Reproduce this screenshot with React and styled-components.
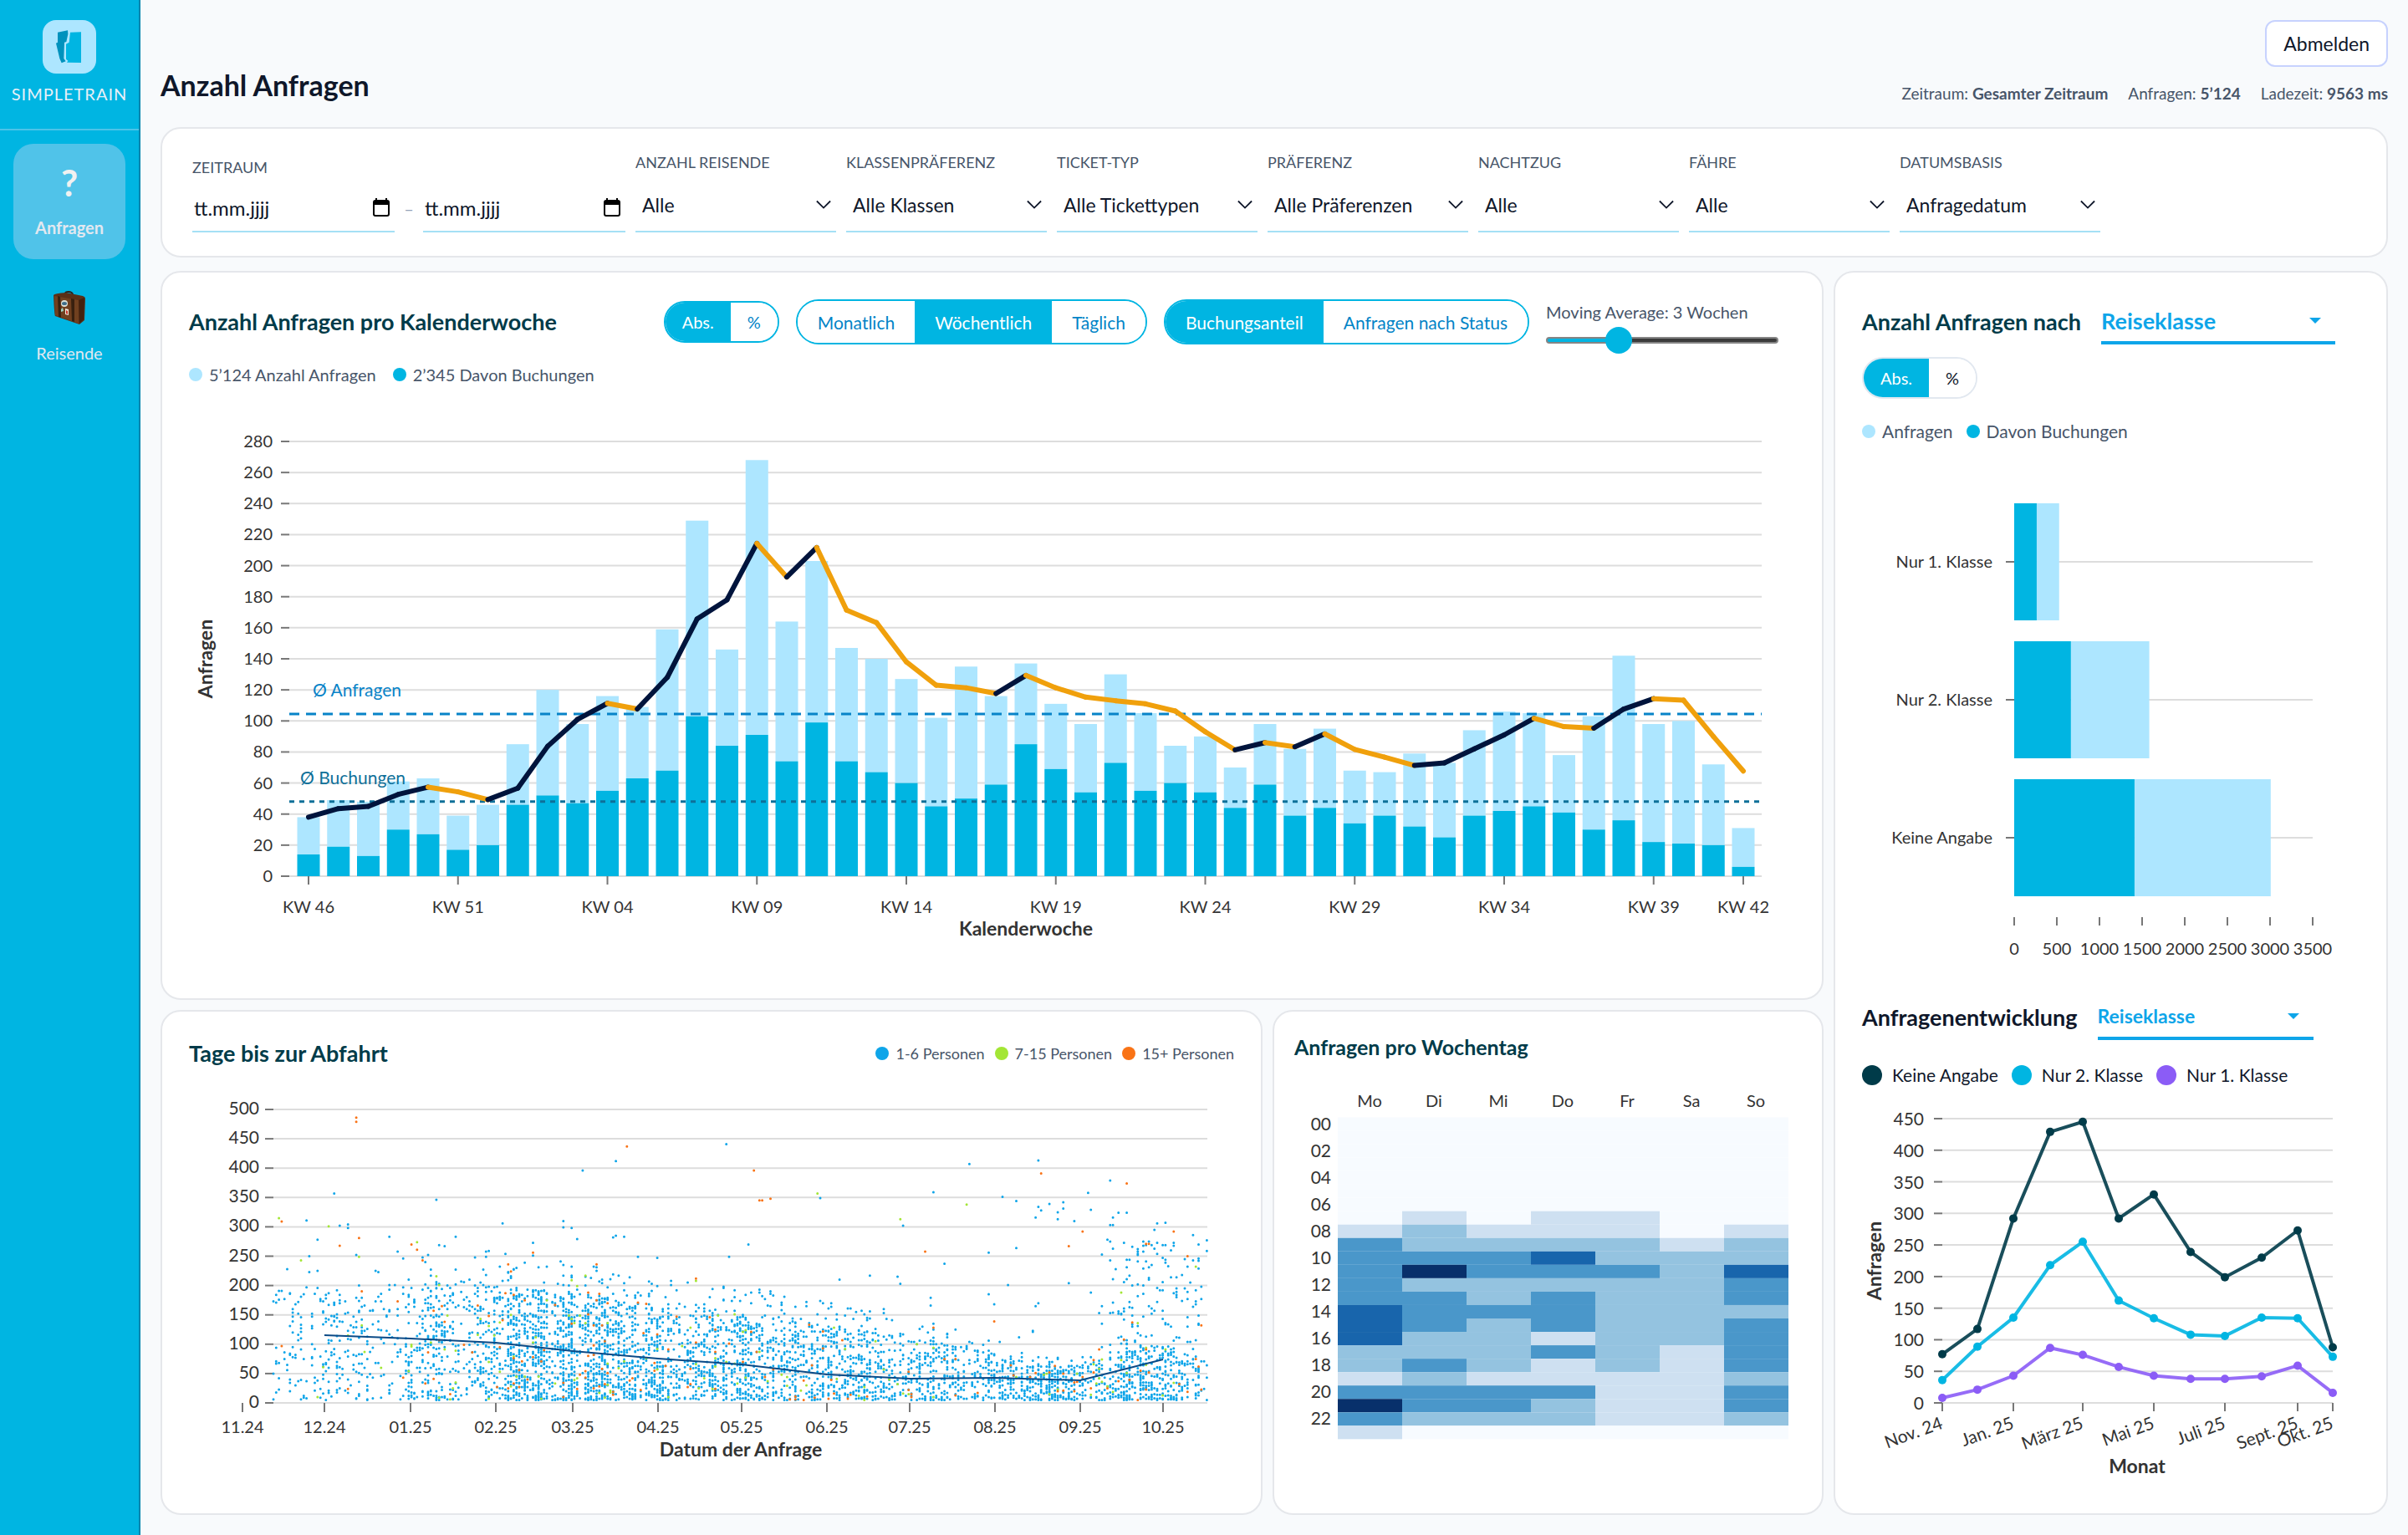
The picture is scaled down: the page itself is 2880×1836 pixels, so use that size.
import React, { useState } from 'react';
import styled, { createGlobalStyle } from 'styled-components';

const weeks = [
  [38, 14], [49, 19], [48, 13], [61, 30], [63, 27], [39, 17], [46, 20],
  [85, 46], [120, 52], [98, 47], [116, 55], [109, 63], [159, 68], [229, 103],
  [146, 84], [268, 91], [164, 74], [203, 99], [147, 74], [140, 67], [127, 60],
  [102, 45], [135, 50], [116, 59], [137, 85], [111, 69], [98, 54], [130, 73],
  [105, 55], [84, 60], [90, 54], [70, 44], [98, 59], [82, 39], [95, 44],
  [68, 34], [67, 39], [79, 32], [73, 25], [94, 39], [106, 42], [105, 45],
  [78, 41], [103, 30], [142, 36], [98, 22], [100, 21], [72, 20], [31, 6],
];

const weekTicks = [
  [0, 'KW 46'], [5, 'KW 51'], [10, 'KW 04'], [15, 'KW 09'], [20, 'KW 14'], [25, 'KW 19'],
  [30, 'KW 24'], [35, 'KW 29'], [40, 'KW 34'], [45, 'KW 39'], [48, 'KW 42'],
];

const filters = [
  { id: 'reisende', label: 'Anzahl Reisende', value: 'Alle' },
  { id: 'klasse', label: 'Klassenpräferenz', value: 'Alle Klassen' },
  { id: 'ticket', label: 'Ticket-Typ', value: 'Alle Tickettypen' },
  { id: 'praeferenz', label: 'Präferenz', value: 'Alle Präferenzen' },
  { id: 'nachtzug', label: 'Nachtzug', value: 'Alle' },
  { id: 'faehre', label: 'Fähre', value: 'Alle' },
  { id: 'basis', label: 'Datumsbasis', value: 'Anfragedatum' },
];

const classes = [
  { name: 'Nur 1. Klasse', total: 527, booked: 264 },
  { name: 'Nur 2. Klasse', total: 1584, booked: 665 },
  { name: 'Keine Angabe', total: 3008, booked: 1411 },
];

const monthX = [96, 138, 181, 225, 264, 307, 349, 393, 434, 478, 521, 563];
const monthTicks = [
  [0, 'Nov. 24'], [2, 'Jan. 25'], [4, 'März 25'], [6, 'Mai 25'],
  [8, 'Juli 25'], [10, 'Sept. 25'], [11, 'Okt. 25'],
];
const series = [
  { name: 'Keine Angabe', color: '#003b49', values: [77, 117, 292, 429, 445, 292, 330, 239, 199, 230, 273, 88] },
  { name: 'Nur 2. Klasse', color: '#00b5e2', values: [36, 89, 135, 218, 255, 162, 134, 108, 106, 135, 134, 73] },
  { name: 'Nur 1. Klasse', color: '#8b5cf6', values: [8, 21, 43, 87, 76, 57, 43, 38, 38, 42, 59, 16] },
];

const days = ['Mo', 'Di', 'Mi', 'Do', 'Fr', 'Sa', 'So'];
const heat = [
  '0000000', '0000000', '0000000', '0000000', '0000000', '0000000', '0000000', '0101100',
  '1211101', '3222212', '3334222', '3533324', '3222223', '3323223', '4333222', '4323223',
  '4221223', '2223213', '2321213', '1211112', '3333113', '5332113', '3222112', '1000000',
];
const heatColors = ['#f7fbff', '#cee0f1', '#94c3e0', '#4a97ca', '#1865ac', '#08306b'];

const movingAverage = (list, size) =>
  list.map((_, i) => {
    const part = list.slice(Math.max(0, i - size + 1), i + 1);
    return part.reduce((sum, n) => sum + n, 0) / part.length;
  });

const range = (from, to, step) => {
  const out = [];
  for (let n = from; n <= to; n += step) out.push(n);
  return out;
};

// small seeded generator so the scatter looks the same on every load
const createRandom = (seed) => {
  let s = seed;
  return () => {
    s = (s * 1664525 + 1013904223) % 4294967296;
    return s / 4294967296;
  };
};

const envelope = [
  [0, 190], [60, 200], [100, 190], [130, 168], [160, 155], [200, 128],
  [230, 108], [260, 82], [275, 62], [295, 60], [310, 95], [339, 88],
];

const upperBound = (day) => {
  const i = Math.max(1, envelope.findIndex(([d]) => d >= day));
  const [d0, v0] = envelope[i - 1];
  const [d1, v1] = envelope[i];
  return v0 + ((v1 - v0) * (day - d0)) / (d1 - d0);
};

// [day, value, group]
const outliers = [
  [30, 486, 2], [30, 479, 2], [128, 437, 2], [124, 412, 0], [112, 396, 0], [164, 441, 0],
  [22, 357, 0], [59, 346, 0], [2, 315, 1], [3, 309, 2], [31, 281, 2], [12, 311, 0],
  [27, 304, 0], [27, 298, 0], [83, 306, 0], [105, 310, 0], [105, 299, 0], [108, 298, 0],
  [20, 301, 1], [24, 302, 0], [42, 283, 0], [16, 278, 0], [24, 268, 2], [50, 270, 2],
  [52, 261, 2], [52, 274, 1], [66, 283, 0], [94, 273, 0], [110, 279, 0], [123, 282, 0],
  [124, 285, 0], [127, 283, 0], [132, 249, 0], [139, 247, 0], [165, 249, 0], [172, 270, 0],
  [174, 396, 2], [176, 345, 2], [177, 345, 2], [180, 348, 2], [197, 357, 1], [198, 349, 0],
  [227, 313, 1], [228, 302, 0], [236, 258, 2], [239, 359, 0], [243, 237, 0], [251, 338, 1],
  [252, 407, 0], [259, 256, 0], [264, 351, 0], [269, 344, 0], [269, 264, 0], [277, 413, 0],
  [278, 391, 2], [303, 379, 0], [309, 374, 2], [295, 358, 0], [293, 292, 2], [288, 267, 2],
  [286, 342, 0], [286, 331, 0], [281, 339, 0], [284, 325, 0], [284, 313, 0], [277, 334, 0],
  [278, 328, 0], [276, 316, 0], [296, 329, 0], [304, 316, 0], [304, 303, 0], [303, 303, 0],
  [306, 324, 0], [309, 324, 0], [290, 310, 0], [320, 306, 0], [323, 307, 0], [319, 295, 0],
  [326, 292, 2], [333, 286, 0], [331, 250, 2], [338, 277, 0], [335, 270, 0], [326, 273, 0],
];

const buildScatter = () => {
  const random = createRandom(46);
  const groups = ['', '', ''];
  const add = (day, value, group) => {
    const x = (101 + day * 3.303).toFixed(1);
    const y = (378 - value * 0.702).toFixed(1);
    groups[group] += `M${x} ${y}h0`;
  };
  for (let day = 0; day < 339; day += 1) {
    const count = Math.round((weeks[Math.floor(day / 7)][0] / 7) * (0.3 + random() * 1.3));
    const upper = upperBound(day);
    for (let i = 0; i < count; i += 1) {
      const pick = random();
      let value = 5 + Math.floor(Math.pow(random(), 1.25) * upper);
      if (pick > 0.95) value = Math.floor(upper * (1 + random() * 0.35));
      if (day > 195 && pick < 0.03) value = Math.floor(110 + random() * 110);
      if (day > 298 && pick < 0.2) value = Math.floor(130 + Math.pow(random(), 1.3) * 150);
      const g = random();
      let group = 0;
      if (g > 0.935) group = 1;
      if (g > 0.965) group = 2;
      add(day, value, group);
    }
  }
  outliers.forEach(([day, value, group]) => add(day, value, group));
  return groups;
};

const scatter = buildScatter();

const Dropdown = ({ id, label, value, options = [] }) => (
  <SelectWrap>
    <Select id={id} aria-label={label} defaultValue={value}>
      {[value, ...options].map((o) => <option key={o}>{o}</option>)}
    </Select>
    <Chevron viewBox="0 0 20 20" aria-hidden="true">
      <path d="M1 5l9 9 9-9" fill="none" stroke="#0f172a" strokeWidth="2" />
    </Chevron>
  </SelectWrap>
);

const TitleDropdown = ({ label, large }) => (
  <TitleSelectWrap $large={large}>
    <TitleSelect aria-label={label} $large={large} defaultValue="Reiseklasse">
      <option>Reiseklasse</option>
      <option>Ticket-Typ</option>
    </TitleSelect>
    <Caret viewBox="0 0 16 8" aria-hidden="true">
      <path d="M1 1h14L8 8z" fill="#0ea5e9" />
    </Caret>
  </TitleSelectWrap>
);

const Toggle = ({ options, initial, tall, muted }) => {
  const [active, setActive] = useState(initial);
  return (
    <ToggleGroup $muted={muted}>
      {options.map((option) => (
        <ToggleButton
          key={option}
          type="button"
          $active={option === active}
          $tall={tall}
          $muted={muted}
          onClick={() => setActive(option)}
        >
          {option}
        </ToggleButton>
      ))}
    </ToggleGroup>
  );
};

const DateField = ({ id, label }) => (
  <DateWrap>
    <DateInput id={id} aria-label={label} placeholder="tt.mm.jjjj" />
    <CalendarIcon viewBox="0 0 20 22" aria-hidden="true">
      <path d="M1 3h18v5H1zM3 0h2v3H3zM15 0h2v3h-2z" fill="#000" />
      <rect x="1" y="3" width="18" height="18" rx="2" fill="none" stroke="#000" strokeWidth="2" />
    </CalendarIcon>
  </DateWrap>
);

const WeekChart = ({ average }) => {
  const y = (v) => 568 - (v * 520) / 280;
  const x = (i) => 143 + i * 35.75;
  const line = movingAverage(weeks.map((w) => w[0]), average);
  return (
    <Chart viewBox="0 0 1921 682" role="img" aria-label="Anfragen pro Kalenderwoche">
      {range(0, 280, 20).map((v) => (
        <g key={v}>
          <GridLine x1="120" x2="1881" y1={y(v)} y2={y(v)} />
          <Tick x1="110" x2="120" y1={y(v)} y2={y(v)} />
          <AxisText x="100" y={y(v) + 7} textAnchor="end">{v}</AxisText>
        </g>
      ))}
      {weeks.map(([total, booked], i) => (
        <g key={i}>
          <rect x={x(i) - 13.5} width="27" y={y(total)} height={y(booked) - y(total)} fill="#ade6ff" />
          <rect x={x(i) - 13.5} width="27" y={y(booked)} height={568 - y(booked)} fill="#00b5e2" />
        </g>
      ))}
      {weekTicks.map(([i, text]) => (
        <g key={text}>
          <Tick x1={x(i)} x2={x(i)} y1="568" y2="578" />
          <AxisText x={x(i)} y="612" textAnchor="middle">{text}</AxisText>
        </g>
      ))}
      <line x1="120" x2="1881" y1={y(104.5)} y2={y(104.5)} stroke="#0883c8" strokeWidth="3" strokeDasharray="12 8" />
      <line x1="120" x2="1881" y1={y(48)} y2={y(48)} stroke="#0e7099" strokeWidth="3" strokeDasharray="6 6" />
      {line.slice(1).map((v, i) => (
        <line
          key={i}
          x1={x(i)}
          y1={y(line[i])}
          x2={x(i + 1)}
          y2={y(v)}
          stroke={v > line[i] ? '#00143c' : '#f0a00c'}
          strokeWidth="6"
          strokeLinecap="round"
        />
      ))}
      <AxisText x="148" y="353" fill="#0883c8" $size={21}>Ø Anfragen</AxisText>
      <AxisText x="133" y="458" fill="#0e7099" $size={21}>Ø Buchungen</AxisText>
      <AxisTitle x="1001" y="639" textAnchor="middle">Kalenderwoche</AxisTitle>
      <AxisTitle transform="translate(28 308) rotate(-90)" textAnchor="middle">Anfragen</AxisTitle>
    </Chart>
  );
};

const ClassChart = () => {
  const x = (v) => 182 + (v * 357) / 3500;
  return (
    <Chart viewBox="0 0 595 620" role="img" aria-label="Anfragen nach Reiseklasse">
      {classes.map((c, i) => {
        const top = 42 + i * 165;
        return (
          <g key={c.name}>
            <GridLine x1="182" x2="539" y1={top + 70} y2={top + 70} />
            <Tick x1="172" x2="182" y1={top + 70} y2={top + 70} />
            <AxisText x="156" y={top + 77} textAnchor="end">{c.name}</AxisText>
            <rect x={x(c.booked)} y={top} width={x(c.total) - x(c.booked)} height="140" fill="#ade6ff" />
            <rect x="182" y={top} width={x(c.booked) - 182} height="140" fill="#00b5e2" />
          </g>
        );
      })}
      {range(0, 3500, 500).map((v) => (
        <g key={v}>
          <Tick x1={x(v)} x2={x(v)} y1="537" y2="547" />
          <AxisText x={x(v)} y="582" textAnchor="middle">{v}</AxisText>
        </g>
      ))}
    </Chart>
  );
};

const TrendChart = () => {
  const y = (v) => 368 - (v * 340) / 450;
  return (
    <Chart viewBox="0 0 595 468" role="img" aria-label="Anfragenentwicklung">
      {range(0, 450, 50).map((v) => (
        <g key={v}>
          <GridLine x1="96" x2="563" y1={y(v)} y2={y(v)} />
          <Tick x1="86" x2="96" y1={y(v)} y2={y(v)} />
          <AxisText x="74" y={y(v) + 8} textAnchor="end" $size={21}>{v}</AxisText>
        </g>
      ))}
      {monthTicks.map(([i, text]) => (
        <g key={text}>
          <Tick x1={monthX[i]} x2={monthX[i]} y1="368" y2="378" />
          <AxisText
            transform={`translate(${monthX[i] + 2} 398) rotate(-20)`}
            textAnchor="end"
            $size={21}
          >
            {text}
          </AxisText>
        </g>
      ))}
      {series.map((s) => (
        <g key={s.name}>
          <polyline
            points={s.values.map((v, i) => `${monthX[i]},${y(v)}`).join(' ')}
            fill="none"
            stroke={s.color}
            strokeWidth="4"
            strokeOpacity="0.9"
          />
          {s.values.map((v, i) => <circle key={i} cx={monthX[i]} cy={y(v)} r="5" fill={s.color} />)}
        </g>
      ))}
      <AxisTitle x="329" y="452" textAnchor="middle">Monat</AxisTitle>
      <AxisTitle transform="translate(23 198) rotate(-90)" textAnchor="middle">Anfragen</AxisTitle>
    </Chart>
  );
};

const DepartureChart = () => {
  const y = (v) => 378 - v * 0.702;
  const ticks = [
    [64, '11.24'], [162, '12.24'], [265, '01.25'], [367, '02.25'], [459, '03.25'], [561, '04.25'],
    [661, '05.25'], [763, '06.25'], [862, '07.25'], [964, '08.25'], [1066, '09.25'], [1165, '10.25'],
  ];
  return (
    <Chart viewBox="0 0 1250 478" role="img" aria-label="Tage bis zur Abfahrt">
      {range(0, 500, 50).map((v) => (
        <g key={v}>
          <GridLine x1="101" x2="1218" y1={y(v)} y2={y(v)} />
          <Tick x1="91" x2="101" y1={y(v)} y2={y(v)} />
          <AxisText x="84" y={y(v) + 6} textAnchor="end" $size={21}>{v}</AxisText>
        </g>
      ))}
      {ticks.map(([x, text]) => (
        <g key={text}>
          <Tick x1={x} x2={x} y1="378" y2="389" />
          <AxisText x={x} y="414" textAnchor="middle">{text}</AxisText>
        </g>
      ))}
      <Dots d={scatter[0]} stroke="#0ea5e9" />
      <Dots d={scatter[1]} stroke="#a3e635" />
      <Dots d={scatter[2]} stroke="#f97316" />
      <polyline
        points="162,297 265,301 367,306 459,316 561,325 661,332 763,344 862,349 964,348 1066,351 1165,326"
        fill="none"
        stroke="#0b4a86"
        strokeWidth="2"
      />
      <AxisTitle x="660" y="442" textAnchor="middle">Datum der Anfrage</AxisTitle>
    </Chart>
  );
};

const HeatChart = () => (
  <Chart viewBox="0 0 607 494" role="img" aria-label="Anfragen pro Wochentag">
    {days.map((day, i) => (
      <AxisText key={day} x={90 + i * 77} y="32" textAnchor="middle">{day}</AxisText>
    ))}
    {heat.map((row, hour) => (
      <g key={hour}>
        {row.split('').map((level, i) => (
          <rect key={i} x={52 + i * 77} y={44.4 + hour * 16.04} width="77" height="16.04" fill={heatColors[level]} />
        ))}
        {hour % 2 === 0 && (
          <AxisText x="44" y={60 + hour * 16} textAnchor="end" $size={21}>
            {String(hour).padStart(2, '0')}
          </AxisText>
        )}
      </g>
    ))}
  </Chart>
);

const App = () => {
  const [average, setAverage] = useState(3);
  return (
    <>
      <GlobalStyle />
      <Page>
        <Sidebar>
          <Brand>
            <Logo viewBox="0 0 192 192" aria-hidden="true">
              <rect width="192" height="192" rx="48" fill="#ade6ff" />
              <path d="M54 44L90 37l1 13-6 28-7 2-2 58 7 10-15 6-7-16-13-55 6-3z" fill="#0092bd" />
              <path d="M99 44l39-1v110l-51-1 4-6-7-6V86l11-6z" fill="#00b5e2" />
            </Logo>
            <BrandName>SIMPLETRAIN</BrandName>
          </Brand>
          <Nav>
            <NavItem href="#anfragen" $active>
              <NavMark>?</NavMark>
              Anfragen
            </NavItem>
            <NavItem href="#reisende">
              <Suitcase viewBox="0 0 38 40" aria-hidden="true">
                <path d="M14 5V3q0-2 4-2t5 3v3" fill="none" stroke="#2c211d" strokeWidth="2" />
                <path d="M0 5q1-2 15-3l20 4q3 1 3 3l-1 26-6 5-29-10q-1-1-2-25z" fill="#5a3018" />
                <path d="M1 6l29 5v28L2 29z" fill="#70401f" />
                <path d="M30 11l7-3-1 26-5 5z" fill="#43220f" />
                <path d="M5 6l3 1 1 25-3-1zM21 9l4 1v27l-3-1z" fill="#38200f" />
                <ellipse cx="13" cy="15" rx="4" ry="4" fill="#dfe3d8" />
                <ellipse cx="13" cy="15" rx="3" ry="2" fill="#3f6f8a" />
                <path d="M14 21l4 1v7l-4-1z" fill="#f0e6dc" />
                <path d="M15 23l2 1v4l-2-1z" fill="#c8362c" />
                <path d="M9 22l2-2 1 4-3 1z" fill="#9fd6c4" />
              </Suitcase>
              Reisende
            </NavItem>
          </Nav>
        </Sidebar>
        <Main>
          <TopBar>
            <LogoutButton type="button">Abmelden</LogoutButton>
          </TopBar>
          <TitleRow>
            <PageTitle>Anzahl Anfragen</PageTitle>
            <Meta>
              <span>Zeitraum: <b>Gesamter Zeitraum</b></span>
              <span>Anfragen: <b>5’124</b></span>
              <span>Ladezeit: <b>9563 ms</b></span>
            </Meta>
          </TitleRow>

          <FilterCard>
            <Field>
              <FieldLabel htmlFor="von">Zeitraum</FieldLabel>
              <DateRange>
                <DateField id="von" label="Zeitraum von" />
                <Dash>–</Dash>
                <DateField id="bis" label="Zeitraum bis" />
              </DateRange>
            </Field>
            {filters.map((f) => (
              <Field key={f.id}>
                <FieldLabel htmlFor={f.id}>{f.label}</FieldLabel>
                <Dropdown {...f} />
              </Field>
            ))}
          </FilterCard>

          <Columns>
            <Left>
              <Card>
                <CardHeader>
                  <CardTitle>Anzahl Anfragen pro Kalenderwoche</CardTitle>
                  <Tools>
                    <Toggle options={['Abs.', '%']} initial="Abs." />
                    <Toggle options={['Monatlich', 'Wöchentlich', 'Täglich']} initial="Wöchentlich" tall />
                    <Toggle options={['Buchungsanteil', 'Anfragen nach Status']} initial="Buchungsanteil" tall />
                    <SliderField>
                      <SliderLabel htmlFor="average">Moving Average: {average} Wochen</SliderLabel>
                      <Slider
                        id="average"
                        type="range"
                        min="1"
                        max="8"
                        value={average}
                        style={{ '--fill': `${((average - 1) / 7) * 100}%` }}
                        onChange={(e) => setAverage(Number(e.target.value))}
                      />
                    </SliderField>
                  </Tools>
                </CardHeader>
                <Legend $gap={20} $top={20} $bottom={16}>
                  <LegendItem><Dot $color="#ade6ff" />5’124 Anzahl Anfragen</LegendItem>
                  <LegendItem><Dot $color="#00b5e2" />2’345 Davon Buchungen</LegendItem>
                </Legend>
                <WeekChart average={average} />
              </Card>
              <BottomRow>
                <Card>
                  <CardHeader>
                    <CardTitle>Tage bis zur Abfahrt</CardTitle>
                    <Legend $gap={12} $size={18}>
                      <LegendItem><Dot $color="#0ea5e9" />1-6 Personen</LegendItem>
                      <LegendItem><Dot $color="#a3e635" />7-15 Personen</LegendItem>
                      <LegendItem><Dot $color="#f97316" />15+ Personen</LegendItem>
                    </Legend>
                  </CardHeader>
                  <ChartSpace>
                    <DepartureChart />
                  </ChartSpace>
                </Card>
                <Card $compact>
                  <CardTitle $compact>Anfragen pro Wochentag</CardTitle>
                  <ChartSpace>
                    <HeatChart />
                  </ChartSpace>
                </Card>
              </BottomRow>
            </Left>
            <Card>
              <SelectHeader>
                <CardTitle>Anzahl Anfragen nach</CardTitle>
                <TitleDropdown label="Anzahl Anfragen nach" large />
              </SelectHeader>
              <ToggleRow>
                <Toggle options={['Abs.', '%']} initial="Abs." muted />
              </ToggleRow>
              <Legend $gap={16} $top={23} $bottom={28} $size={21}>
                <LegendItem><Dot $color="#ade6ff" />Anfragen</LegendItem>
                <LegendItem><Dot $color="#00b5e2" />Davon Buchungen</LegendItem>
              </Legend>
              <ClassChart />
              <SelectHeader $second>
                <CardTitle $dark>Anfragenentwicklung</CardTitle>
                <TitleDropdown label="Anfragenentwicklung" />
              </SelectHeader>
              <Legend $gap={16} $top={26} $bottom={8} $size={21} $dark>
                {series.map((s) => (
                  <LegendItem key={s.name} $wide><Dot $color={s.color} $big />{s.name}</LegendItem>
                ))}
              </Legend>
              <TrendChart />
            </Card>
          </Columns>
        </Main>
      </Page>
    </>
  );
};

export default App;

const GlobalStyle = createGlobalStyle`
  *,
  *::before,
  *::after {
    box-sizing: border-box;
  }

  body {
    margin: 0;
    background: #f8fafc;
    color: #0f172a;
    font-family: Lato, "Open Sans", sans-serif;
    font-size: 20px;
    line-height: 32px;
  }

  button,
  input,
  select {
    font-family: inherit;
  }
`;

const Page = styled.div`
  display: flex;
  min-height: 100vh;
`;

const Sidebar = styled.aside`
  flex: 0 0 168px;
  background: #00b5e2;
  border-right: 2px solid #0084ad;
  color: #e8f0f8;
`;

const Brand = styled.div`
  display: flex;
  flex-direction: column;
  align-items: center;
  padding: 24px 0 28px;
  border-bottom: 2px solid #4cc3e8;
`;

const Logo = styled.svg`
  width: 64px;
  height: 64px;
`;

const BrandName = styled.div`
  margin-top: 10px;
  line-height: 28px;
  letter-spacing: 1px;
`;

const Nav = styled.nav`
  display: flex;
  flex-direction: column;
  gap: 12px;
  padding: 16px;
`;

const NavItem = styled.a`
  display: flex;
  flex-direction: column;
  align-items: center;
  justify-content: space-between;
  height: 138px;
  padding: 24px 0 22px;
  border-radius: 24px;
  background: ${(p) => (p.$active ? '#50c3e9' : 'transparent')};
  color: #e2e8f0;
  font-weight: ${(p) => (p.$active ? 700 : 400)};
  text-decoration: none;
`;

const NavMark = styled.span`
  color: #f1f1f1;
  font-size: 44px;
  font-weight: 700;
  line-height: 44px;
`;

const Suitcase = styled.svg`
  width: 38px;
  height: 44px;
`;

const Main = styled.main`
  flex: 1;
  min-width: 0;
  padding: 24px;
`;

const TopBar = styled.div`
  display: flex;
  justify-content: flex-end;
`;

const LogoutButton = styled.button`
  height: 56px;
  padding: 0 20px;
  border: 2px solid #c7d2fe;
  border-radius: 12px;
  background: #fff;
  color: #0f172a;
  font-size: 23px;
  line-height: 28px;
`;

const TitleRow = styled.div`
  display: flex;
  justify-content: space-between;
  align-items: flex-end;
  margin-bottom: 28px;
`;

const PageTitle = styled.h1`
  margin: 0;
  font-size: 34px;
  line-height: 44px;
`;

const Meta = styled.div`
  display: flex;
  gap: 24px;
  color: #475569;
  font-size: 19px;
  line-height: 24px;
`;

const Card = styled.section`
  min-width: 0;
  padding: ${(p) => (p.$compact ? '24px' : '32px')};
  border: 2px solid #e5e7eb;
  border-radius: 24px;
  background: #fff;
`;

const FilterCard = styled(Card)`
  display: flex;
  flex-wrap: wrap;
  align-items: flex-end;
  gap: 12px;
  margin-bottom: 16px;
  padding: 28px 36px;
`;

const Field = styled.div`
  display: flex;
  flex-direction: column;
  gap: 8px;
`;

const FieldLabel = styled.label`
  color: #475569;
  font-size: 18px;
  line-height: 24px;
  text-transform: uppercase;
`;

const DateRange = styled.div`
  display: flex;
  align-items: center;
`;

const DateWrap = styled.div`
  display: flex;
  align-items: center;
  width: 242px;
  height: 58px;
  padding: 0 6px 0 2px;
  border-bottom: 2px solid #a5e0f5;
`;

const DateInput = styled.input`
  flex: 1;
  min-width: 0;
  padding: 0;
  border: 0;
  outline: 0;
  background: transparent;
  color: #0f172a;
  font-size: 24px;

  &::placeholder {
    color: #0f172a;
    opacity: 1;
  }
`;

const CalendarIcon = styled.svg`
  width: 20px;
  height: 22px;
`;

const Dash = styled.span`
  width: 34px;
  color: #94a3b8;
  text-align: center;
`;

const SelectWrap = styled.div`
  display: grid;
  align-items: center;
  width: 240px;
  height: 64px;
  border-bottom: 2px solid #a5e0f5;
`;

const Select = styled.select`
  grid-area: 1 / 1;
  height: 100%;
  padding: 0 8px;
  border: 0;
  appearance: none;
  background: transparent;
  color: #0f172a;
  font-size: 23px;
`;

const Chevron = styled.svg`
  grid-area: 1 / 1;
  justify-self: end;
  width: 18px;
  height: 18px;
  margin-right: 6px;
  pointer-events: none;
`;

const Columns = styled.div`
  display: grid;
  grid-template-columns: 3fr 1fr;
  gap: 12px;
`;

const Left = styled.div`
  display: grid;
  gap: 12px;
  min-width: 0;
`;

const BottomRow = styled.div`
  display: grid;
  grid-template-columns: 2fr 1fr;
  gap: 12px;
`;

const CardHeader = styled.header`
  display: flex;
  align-items: center;
  justify-content: space-between;
`;

const CardTitle = styled.h2`
  margin: 0;
  color: ${(p) => (p.$dark ? '#0f172a' : '#003b49')};
  font-size: ${(p) => (p.$compact ? '25px' : '27px')};
  line-height: 36px;
  white-space: nowrap;
`;

const Tools = styled.div`
  display: flex;
  align-items: center;
  gap: 20px;
  margin-right: 20px;
`;

const ToggleGroup = styled.div`
  display: flex;
  overflow: hidden;
  border: 2px solid ${(p) => (p.$muted ? '#e2e8f0' : '#00b5e2')};
  border-radius: 28px;
`;

const ToggleButton = styled.button`
  height: ${(p) => (p.$tall ? '50px' : '46px')};
  padding: 0 ${(p) => (p.$tall ? '24px' : '20px')};
  border: 0;
  background: ${(p) => (p.$active ? '#00b5e2' : '#fff')};
  color: ${(p) => (p.$active ? '#fff' : p.$muted ? '#0f172a' : '#0284c7')};
  font-size: ${(p) => (p.$tall ? '21px' : '20px')};
`;

const ToggleRow = styled.div`
  display: flex;
  margin-top: 15px;
`;

const SliderField = styled.div`
  display: flex;
  flex-direction: column;
  gap: 16px;
  width: 278px;
`;

const SliderLabel = styled.label`
  color: #475569;
  line-height: 28px;
`;

const Slider = styled.input`
  height: 8px;
  width: 100%;
  margin: 0;
  appearance: none;
  background: transparent;

  &::-webkit-slider-runnable-track {
    height: 8px;
    border: 2px solid #858585;
    border-radius: 4px;
    background: linear-gradient(to right, #00b5e2 var(--fill), #3b3b3b var(--fill));
  }

  &::-webkit-slider-thumb {
    width: 32px;
    height: 32px;
    margin-top: -14px;
    border-radius: 50%;
    appearance: none;
    background: #00b5e2;
  }
`;

const Legend = styled.div`
  display: flex;
  gap: ${(p) => p.$gap}px;
  margin: ${(p) => p.$top || 0}px 0 ${(p) => p.$bottom || 0}px;
  color: ${(p) => (p.$dark ? '#0f172a' : '#475569')};
  font-size: ${(p) => p.$size || 20}px;
`;

const LegendItem = styled.span`
  display: flex;
  align-items: center;
  gap: ${(p) => (p.$wide ? '12px' : '8px')};
  white-space: nowrap;
`;

const Dot = styled.i`
  width: ${(p) => (p.$big ? '24px' : '16px')};
  height: ${(p) => (p.$big ? '24px' : '16px')};
  border-radius: 50%;
  background: ${(p) => p.$color};
`;

const SelectHeader = styled.header`
  display: flex;
  align-items: center;
  gap: 24px;
  margin-top: ${(p) => (p.$second ? '10px' : '0')};
`;

const TitleSelectWrap = styled.div`
  display: grid;
  align-items: center;
  width: ${(p) => (p.$large ? '280px' : '258px')};
  height: 54px;
  border-bottom: 4px solid #0ea5e9;
`;

const TitleSelect = styled.select`
  grid-area: 1 / 1;
  height: 100%;
  padding: 0;
  border: 0;
  appearance: none;
  background: transparent;
  color: #0ea5e9;
  font-size: ${(p) => (p.$large ? '27px' : '23px')};
  font-weight: 700;
`;

const Caret = styled.svg`
  grid-area: 1 / 1;
  justify-self: end;
  width: 16px;
  height: 8px;
  margin-right: 16px;
  pointer-events: none;
`;

const ChartSpace = styled.div`
  margin-top: 22px;
`;

const Chart = styled.svg`
  display: block;
  width: 100%;
  height: auto;
`;

const GridLine = styled.line`
  stroke: #dddddd;
  stroke-width: 2;
`;

const Tick = styled.line`
  stroke: #777777;
  stroke-width: 2;
`;

const AxisText = styled.text.attrs((p) => ({ fill: p.fill || '#333333' }))`
  font-size: ${(p) => p.$size || 20}px;
`;

const AxisTitle = styled.text`
  fill: #333333;
  font-size: 23px;
  font-weight: 700;
`;

const Dots = styled.path`
  fill: none;
  stroke-width: 3;
  stroke-linecap: round;
`;
